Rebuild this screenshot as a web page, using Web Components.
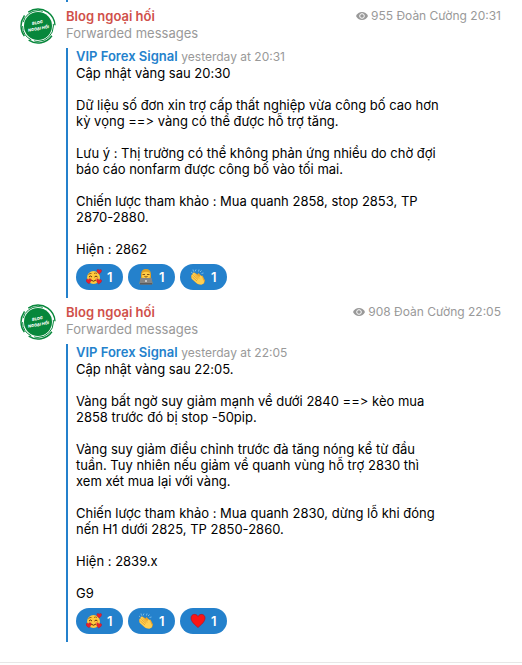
<!DOCTYPE html>
<html lang="vi">
<head>
<meta charset="utf-8">
<meta name="viewport" content="width=device-width, initial-scale=1">
<title>VIP Forex Signal</title>
<style>
  body {
    margin: 0;
    background: #fff;
    color: #000;
    font: 13px/16px Inter, "Noto Sans", sans-serif;
  }
</style>
</head>
<body>
<chat-history>
  <chat-message name="Blog ngoại hối" views="955" sender="Đoàn Cường" time="20:31">
    <forwarded-post author="VIP Forex Signal" date="yesterday at 20:31">Cập nhật vàng sau 20:30

Dữ liệu số đơn xin trợ cấp thất nghiệp vừa công bố cao hơn
kỳ vọng ==&gt; vàng có thể được hỗ trợ tăng.

Lưu ý : Thị trường có thể không phản ứng nhiều do chờ đợi
báo cáo nonfarm được công bố vào tối mai.

Chiến lược tham khảo : Mua quanh 2858, stop 2853, TP
2870-2880.

Hiện : 2862<message-reaction slot="reactions" icon="love" count="1"></message-reaction><message-reaction slot="reactions" icon="laptop" count="1"></message-reaction><message-reaction slot="reactions" icon="clap" count="1"></message-reaction></forwarded-post>
  </chat-message>
  <chat-message name="Blog ngoại hối" views="908" sender="Đoàn Cường" time="22:05">
    <forwarded-post author="VIP Forex Signal" date="yesterday at 22:05">Cập nhật vàng sau 22:05.

Vàng bất ngờ suy giảm mạnh về dưới 2840 ==&gt; kèo mua
2858 trước đó bị stop -50pip.

Vàng suy giảm điều chỉnh trước đà tăng nóng kể từ đầu
tuần. Tuy nhiên nếu giảm về quanh vùng hỗ trợ 2830 thì
xem xét mua lại với vàng.

Chiến lược tham khảo : Mua quanh 2830, dừng lỗ khi đóng
nến H1 dưới 2825, TP 2850-2860.

Hiện : 2839.x

G9<message-reaction slot="reactions" icon="love" count="1"></message-reaction><message-reaction slot="reactions" icon="clap" count="1"></message-reaction><message-reaction slot="reactions" icon="heart" count="1"></message-reaction></forwarded-post>
  </chat-message>
</chat-history>

<script>
// Emoji drawings for the reactions, all on a 32 x 32 grid
const HEART = "M16 29C9 23 2 17 2 10c0-8 10-10 14-3 4-7 14-5 14 3 0 7-7 13-14 19z";
const ICONS = {
  love: `
    <circle cx="15" cy="17" r="13" fill="#ffc83d"/>
    <path d="M5 11q3-3 6-2M16 9q3-2 6 0" fill="none" stroke="#8a4b12" stroke-width="1.6"/>
    <path d="M6 16q3-4 6 0M17 16q3-4 6 0" fill="none" stroke="#61310e" stroke-width="2"/>
    <ellipse cx="8" cy="20" rx="3" ry="2" fill="#f48b4a"/>
    <ellipse cx="22" cy="20" rx="3" ry="2" fill="#f48b4a"/>
    <path d="M10 22q5 5 10 0" fill="none" stroke="#61310e" stroke-width="2"/>
    <g fill="#e9202d" stroke="#b90f22" stroke-width="2">
      <path d="${HEART}" transform="translate(21 0) scale(.34)"/>
      <path d="${HEART}" transform="translate(-1 20) rotate(-8) scale(.36)"/>
      <path d="${HEART}" transform="translate(21 19) rotate(8) scale(.36)"/>
    </g>`,
  laptop: `
    <path d="M6 19V10Q7 0 16 0t10 10v9z" fill="#e0a126"/>
    <path d="M8 8Q16 3 24 8v8q-2 5-8 5t-8-5z" fill="#ffcb45"/>
    <path d="M9 11h5M18 11h5M13 15q3 2 6 0" fill="none" stroke="#76430f" stroke-width="1.8"/>
    <path d="M3 30q0-11 8-12h10q8 1 8 12z" fill="#b98d3e"/>
    <rect x="4" y="18" width="24" height="13" rx="2" fill="#858585"/>
    <rect x="4" y="28" width="24" height="3" fill="#5c5c5c"/>
    <circle cx="16" cy="24" r="2" fill="#dcdcdc"/>`,
  clap: `
    <path d="M4 10l4 1-1-5 5 3 3 2 2-3 6 6 2-1 5 10-2 6-6 2-7-1L5 21l-3-5z" fill="#eaa42a"/>
    <path d="M3 13q1-3 4 0L5 9q2-3 5 0l9 8q0-5 3-4 3 2 4 8 5 6-2 10-6 1-11-3L3 19q-1-3 2-3-3-1-2-3z" fill="#ffcf52"/>
    <path d="M7 13l9 8M5 16l9 8M10 11l8 8" fill="none" stroke="#dc9422" stroke-width="1.4"/>
    <path d="M2 6l3 2M6 1l1 4M12 1l-2 4M18 1l-1 4M23 3l-3 3M27 8l-4 1" stroke="#8cc9ee" stroke-width="1.6"/>`,
  heart: `<path d="${HEART}" fill="#fb1515" stroke="#b01225" stroke-width="1.4"/>`
};

/**
 * Round channel badge: a green disc inside a broken ring
 */
class ChannelAvatar extends HTMLElement {
  connectedCallback() {
    this.attachShadow({ mode: "open" }).innerHTML = `
      <style>
        :host {
          display: block;
          height: 36px;
          width: 36px;
        }

        svg {
          display: block;
        }

        text {
          fill: #fff;
          font: italic 800 4px Inter, sans-serif;
          text-anchor: middle;
        }
      </style>
      <svg width="36" height="36" viewBox="0 0 36 36" aria-label="Blog ngoại hối">
        <circle cx="18" cy="18" r="14" fill="#07873b"/>
        <g fill="none" stroke="#07873b">
          <circle cx="18" cy="18" r="15.4" stroke-width="1" stroke-dasharray="28 3 17 4 25 17"/>
          <circle cx="18" cy="18" r="17" stroke-width="1.4" stroke-dasharray="26 6 22 5 36 12" transform="rotate(35 18 18)"/>
        </g>
        <g transform="rotate(-10 18 18)">
          <text x="18" y="16">BLOG</text>
          <text x="18" y="22">NGOẠI HỐI</text>
        </g>
      </svg>
    `;
  }
}

/**
 * Pill button with an emoji and the number of people who picked it
 */
class MessageReaction extends HTMLElement {
  connectedCallback() {
    let icon = this.getAttribute("icon");
    let count = this.getAttribute("count");

    this.attachShadow({ mode: "open" }).innerHTML = `
      <style>
        :host {
          display: block;
        }

        button {
          align-items: center;
          background: #2481cc;
          border: none;
          border-radius: 13px;
          color: #fff;
          cursor: pointer;
          display: flex;
          font: 600 13px/16px Inter, sans-serif;
          gap: 5px;
          height: 26px;
          min-width: 47px;
          padding: 0 10px;
        }
      </style>
      <button type="button" aria-label="${icon} ${count}">
        <svg width="16" height="16" viewBox="0 0 32 32" aria-hidden="true">${ICONS[icon]}</svg>
        <span>${count}</span>
      </button>
    `;
  }
}

/**
 * Post quoted from another channel, with its reactions below
 */
class ForwardedPost extends HTMLElement {
  connectedCallback() {
    let author = this.getAttribute("author");
    let date = this.getAttribute("date");

    this.attachShadow({ mode: "open" }).innerHTML = `
      <style>
        :host {
          border-left: 2px solid #2481cc;
          display: block;
          padding: 0 0 8px 8px;
        }

        header {
          color: #999;
          line-height: 17px;
        }

        a {
          color: #2481cc;
          font-weight: 600;
          text-decoration: none;
        }

        time {
          font-size: 12px;
        }

        /* Keep ==> as typed instead of one arrow glyph */
        .text {
          font-variant-ligatures: no-contextual;
          white-space: pre-line;
        }

        .reactions {
          display: flex;
          flex-wrap: wrap;
          gap: 5px;
          margin-top: 7px;
        }
      </style>
      <header><a href="#">${author}</a> <time>${date}</time></header>
      <div class="text"><slot></slot></div>
      <div class="reactions"><slot name="reactions"></slot></div>
    `;
  }
}

/**
 * One row of the chat: avatar, sender line and the message body
 */
class ChatMessage extends HTMLElement {
  connectedCallback() {
    let name = this.getAttribute("name");
    let views = this.getAttribute("views");
    let sender = this.getAttribute("sender");
    let time = this.getAttribute("time");

    this.attachShadow({ mode: "open" }).innerHTML = `
      <style>
        :host {
          display: flex;
          gap: 10px;
          padding: 6px 21px 0 20px;
        }

        channel-avatar {
          flex: none;
        }

        .content {
          flex: 1;
          min-width: 0;
        }

        .top {
          display: flex;
          justify-content: space-between;
        }

        .name {
          color: #d0504a;
          font-weight: 600;
          text-decoration: none;
        }

        .info {
          align-items: center;
          color: #999;
          display: flex;
          font-size: 12px;
          gap: 3px;
        }

        .forwarded {
          color: #999;
          margin: 1px 0 7px;
        }
      </style>
      <channel-avatar></channel-avatar>
      <div class="content">
        <div class="top">
          <a class="name" href="#">${name}</a>
          <div class="info">
            <svg width="12" height="10" viewBox="0 0 12 10" aria-hidden="true">
              <path d="M0 5Q2 1 6 1t6 4Q10 9 6 9T0 5z" fill="#999"/>
              <circle cx="6" cy="5" r="2.3" fill="#999" stroke="#fff" stroke-width="1"/>
            </svg>
            <span>${views} ${sender} ${time}</span>
          </div>
        </div>
        <div class="forwarded">Forwarded messages</div>
        <slot></slot>
      </div>
    `;
  }
}

/**
 * Message list, starting with the tail of the previous post's bar
 */
class ChatHistory extends HTMLElement {
  connectedCallback() {
    this.attachShadow({ mode: "open" }).innerHTML = `
      <style>
        :host {
          border-bottom: 1px solid #e7e7e7;
          display: block;
          padding-bottom: 20px;
        }

        .previous {
          border-left: 2px solid #2481cc;
          height: 2px;
          margin-left: 66px;
        }
      </style>
      <div class="previous"></div>
      <slot></slot>
    `;
  }
}

customElements.define("channel-avatar", ChannelAvatar);
customElements.define("message-reaction", MessageReaction);
customElements.define("forwarded-post", ForwardedPost);
customElements.define("chat-message", ChatMessage);
customElements.define("chat-history", ChatHistory);
</script>
</body>
</html>
